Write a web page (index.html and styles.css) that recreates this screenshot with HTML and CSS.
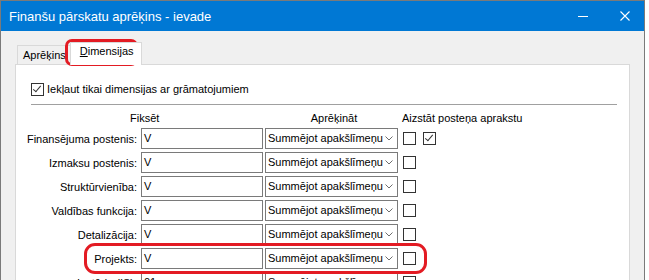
FILE: index.html
```html
<html>
	<head>
		<meta charset="UTF-8" />
		<title>Finanšu pārskatu aprēķins - ievade</title>
		<link rel="stylesheet" href="styles.css">
	</head>
	<body>
		<div class="window">
			<div class="titlebar">
				<span class="title">Finanšu pārskatu aprēķins - ievade</span>
				<div class="controls">
					<svg class="ctl" width="10" height="10" viewBox="0 0 10 10"><path d="M0 5.5h10" stroke="#fff" stroke-width="1"/></svg>
					<svg class="ctl close" width="10" height="10" viewBox="0 0 10 10"><path d="M0.5 0.5l9 9M9.5 0.5l-9 9" stroke="#fff" stroke-width="1.1"/></svg>
				</div>
			</div>
			<div class="client">
				<div class="tabs">
					<div class="tab">Aprēķins</div>
					<div class="tab active"><u>D</u>imensijas</div>
				</div>
				<div class="panel">
					<div class="check-line"><span class="cb checked"></span>Iekļaut tikai dimensijas ar grāmatojumiem</div>
					<div class="sep"></div>
					<div class="grid">
						<div></div>
						<div class="head head-fix">Fiksēt</div>
						<div class="head head-calc">Aprēķināt</div>
						<div class="head head-repl">Aizstāt posteņa aprakstu</div>
						<div></div>

						<div class="lbl">Finansējuma postenis:</div>
						<div class="edit">V</div>
						<div class="combo"><span>Summējot apakšlīmeņu:</span><svg width="8" height="5" viewBox="0 0 8 5"><path d="M0.5 0.5l3.5 3.5 3.5-3.5" fill="none" stroke="#6d6d6d"/></svg></div>
						<span class="cb"></span>
						<span class="cb checked"></span>

						<div class="lbl">Izmaksu postenis:</div>
						<div class="edit">V</div>
						<div class="combo"><span>Summējot apakšlīmeņu:</span><svg width="8" height="5" viewBox="0 0 8 5"><path d="M0.5 0.5l3.5 3.5 3.5-3.5" fill="none" stroke="#6d6d6d"/></svg></div>
						<span class="cb"></span>
						<div></div>

						<div class="lbl">Struktūrvienība:</div>
						<div class="edit">V</div>
						<div class="combo"><span>Summējot apakšlīmeņu:</span><svg width="8" height="5" viewBox="0 0 8 5"><path d="M0.5 0.5l3.5 3.5 3.5-3.5" fill="none" stroke="#6d6d6d"/></svg></div>
						<span class="cb"></span>
						<div></div>

						<div class="lbl">Valdības funkcija:</div>
						<div class="edit">V</div>
						<div class="combo"><span>Summējot apakšlīmeņu:</span><svg width="8" height="5" viewBox="0 0 8 5"><path d="M0.5 0.5l3.5 3.5 3.5-3.5" fill="none" stroke="#6d6d6d"/></svg></div>
						<span class="cb"></span>
						<div></div>

						<div class="lbl">Detalizācija:</div>
						<div class="edit">V</div>
						<div class="combo"><span>Summējot apakšlīmeņu:</span><svg width="8" height="5" viewBox="0 0 8 5"><path d="M0.5 0.5l3.5 3.5 3.5-3.5" fill="none" stroke="#6d6d6d"/></svg></div>
						<span class="cb"></span>
						<div></div>

						<div class="lbl">Projekts:</div>
						<div class="edit">V</div>
						<div class="combo"><span>Summējot apakšlīmeņu:</span><svg width="8" height="5" viewBox="0 0 8 5"><path d="M0.5 0.5l3.5 3.5 3.5-3.5" fill="none" stroke="#6d6d6d"/></svg></div>
						<span class="cb"></span>
						<div></div>

						<div class="lbl">Iestāde (IS):</div>
						<div class="edit">01</div>
						<div class="combo"><span>Summējot apakšlīmeņu:</span><svg width="8" height="5" viewBox="0 0 8 5"><path d="M0.5 0.5l3.5 3.5 3.5-3.5" fill="none" stroke="#6d6d6d"/></svg></div>
						<span class="cb"></span>
						<div></div>
					</div>
				</div>
			</div>
			<div class="mark mark-tab"></div>
			<div class="mark mark-row"></div>
		</div>
	</body>
</html>
```

FILE: styles.css
```css
body { margin: 0; background: #fff; overflow: hidden; font: 11px "Liberation Sans", Arial, sans-serif; color: #000; }
.window { position: relative; width: 643px; height: 320px; border: 1px solid #7a7a7a; border-bottom: none; background: #f0f0f0; }
.titlebar { height: 30px; background: #0078d4; color: #fff; display: flex; align-items: center; padding-left: 8px; }
.title { font-size: 13px; }
.controls { margin-left: auto; display: flex; align-items: center; padding-right: 14px; }
.ctl { display: block; }
.close { margin-left: 32px; }
.client { padding-top: 11px; }
.tabs { display: flex; align-items: flex-end; height: 22px; padding-left: 16px; }
.tab { height: 18px; line-height: 18px; padding: 0 4px 0 5px; border: 1px solid #d9d9d9; border-bottom: none; background: #f0f0f0; }
.tab.active { position: relative; z-index: 1; height: 22px; line-height: 17px; margin: 0 0 -1px -1px; padding: 0 7px 0 9px; background: #fff; }
.panel { margin: 0 14px 0 14px; height: 240px; border: 1px solid #d9d9d9; background: #fff; }
.check-line { display: flex; align-items: center; height: 13px; line-height: 13px; margin: 18px 0 0 15px; }
.check-line .cb { margin-right: 3px; }
.sep { height: 1px; background: #a0a0a0; margin: 8px 12px 0 15px; }
.grid { display: grid; grid-template-columns: 125px 124px 138px 20px 13px; grid-template-rows: 13px; grid-auto-rows: 21px; row-gap: 3px; margin-top: 7px; align-items: center; }
.head { line-height: 13px; white-space: nowrap; }
.head-fix { margin-left: -11px; }
.head-calc { text-align: center; }
.head-repl { margin-left: -1px; }
.lbl { text-align: right; padding-right: 4px; white-space: nowrap; }
.edit { box-sizing: border-box; width: 122px; height: 21px; line-height: 19px; padding-left: 2px; border: 1px solid #7a7a7a; background: #fff; }
.combo { box-sizing: border-box; width: 133px; height: 21px; line-height: 19px; padding: 0 4px 0 2px; border: 1px solid #7a7a7a; background: #fff; display: flex; align-items: center; }
.combo span { flex: 1; overflow: hidden; white-space: nowrap; }
.combo svg { margin-left: 2px; }
.cb { box-sizing: border-box; display: inline-block; width: 13px; height: 13px; border: 1px solid #333; background: #fff; position: relative; }
.cb.checked::after { content: ""; position: absolute; left: 3px; top: 0px; width: 3px; height: 7px; border: solid #333; border-width: 0 1px 1px 0; transform: rotate(40deg); }
.mark { position: absolute; border: 3px solid #e31b23; }
.mark-tab { left: 64px; top: 38px; width: 67px; height: 21px; border-radius: 7px; }
.mark-row { left: 83px; top: 242px; width: 337px; height: 25px; border-radius: 11px; }
```
